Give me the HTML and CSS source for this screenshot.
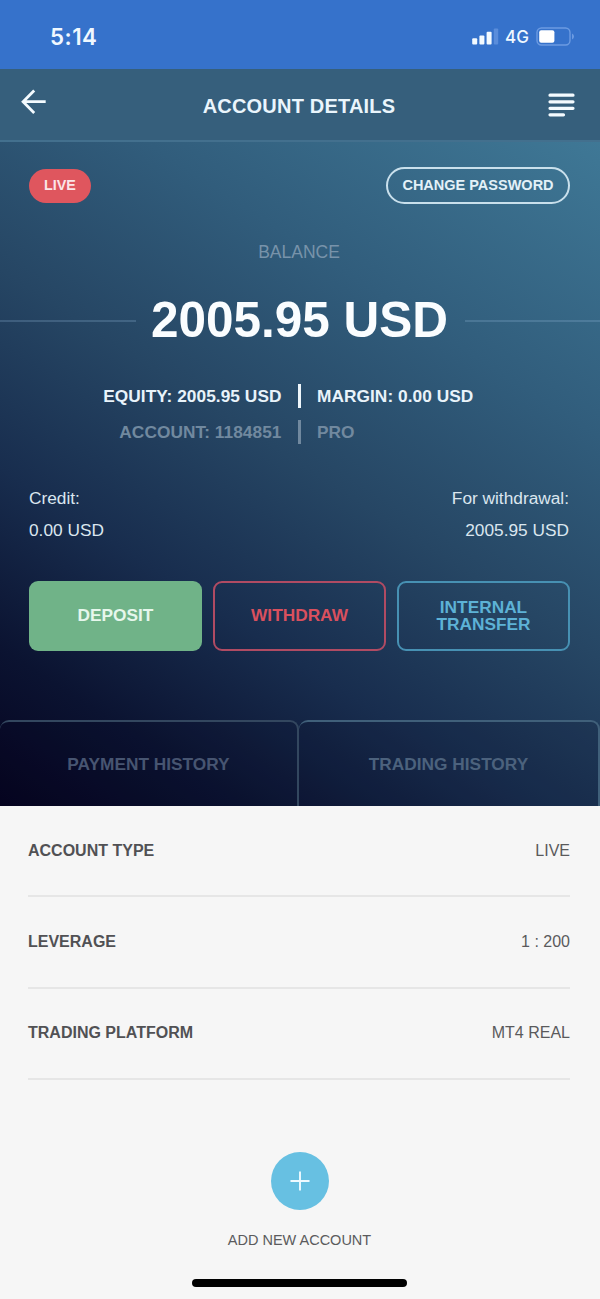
FILE: index.html
```
<!DOCTYPE html>
<html lang="en">
<head>
<meta charset="utf-8">
<title>Account details</title>
<link rel="stylesheet" href="styles.css">
</head>
<body>
<div class="status">
  <span class="time">5:14</span>
  <div class="indicators">
    <svg class="signal" width="28" height="17" viewBox="0 0 28 17"><g fill="#f3faff"><rect x="1.2" y="10.2" width="5" height="6.4" rx="1"/><rect x="8.4" y="7.4" width="5" height="9.2" rx="1"/><rect x="15.6" y="3.8" width="5" height="12.8" rx="1"/></g><rect x="22.8" y="0.6" width="4.4" height="16" rx="1" fill="#5a8ddb"/></svg>
    <span class="network">4G</span>
    <svg class="battery" width="40" height="19" viewBox="0 0 40 19"><rect x="2" y="1" width="33" height="17" rx="4.5" fill="none" stroke="#6c9be2" stroke-width="1.4"/><rect x="4.2" y="3.2" width="15.2" height="12.6" rx="2" fill="#fff"/><path d="M37 6.5q2 .8 2 3t-2 3z" fill="#6c9be2"/></svg>
  </div>
</div>
<header class="header">
  <svg class="back" width="26" height="26" viewBox="0 0 26 26" fill="none" stroke="#f4fbff" stroke-width="2.8"><path d="M14.2 1.5 3.1 12.7l11.1 11.2M3.1 12.7h22.6"/></svg>
  <h1 class="title">ACCOUNT DETAILS</h1>
  <svg class="menu" width="28" height="25" viewBox="0 0 28 25" stroke="#f4fbff" stroke-width="3.2" stroke-linecap="round"><path d="M3 2.2h23M3 8.8h23M3 15.3h23M3 21.8h13.5"/></svg>
</header>
<main>
  <section class="hero">
    <div class="top-row">
      <span class="badge">LIVE</span>
      <button class="password">CHANGE PASSWORD</button>
    </div>
    <div class="label">BALANCE</div>
    <div class="balance"><span class="rule"></span><span class="amount">2005.95 USD</span><span class="rule"></span></div>
    <div class="facts">
      <div class="fact"><span class="left">EQUITY: 2005.95 USD</span><i class="bar"></i><span>MARGIN: 0.00 USD</span></div>
      <div class="fact dim"><span class="left">ACCOUNT: 1184851</span><i class="bar"></i><span>PRO</span></div>
    </div>
    <div class="funds">
      <div>Credit:<br>0.00 USD</div>
      <div class="right">For withdrawal:<br>2005.95 USD</div>
    </div>
    <div class="actions">
      <button class="action deposit">DEPOSIT</button>
      <button class="action withdraw">WITHDRAW</button>
      <button class="action transfer">INTERNAL<br>TRANSFER</button>
    </div>
    <nav class="tabs">
      <a class="tab">PAYMENT HISTORY</a>
      <a class="tab">TRADING HISTORY</a>
    </nav>
  </section>
  <section class="details">
    <div class="row"><b>ACCOUNT TYPE</b><span>LIVE</span></div>
    <div class="row"><b>LEVERAGE</b><span>1 : 200</span></div>
    <div class="row"><b>TRADING PLATFORM</b><span>MT4 REAL</span></div>
  </section>
</main>
<footer class="footer">
  <button class="add"><svg width="20" height="20" viewBox="0 0 20 20" stroke="#effaff" stroke-width="1.9"><path d="M10 .5v19M.5 10h19"/></svg></button>
  <span class="add-label">ADD NEW ACCOUNT</span>
  <span class="home"></span>
</footer>
</body>
</html>
```
FILE: styles.css
```
* { box-sizing: border-box; }
body {
  margin: 0;
  width: 600px;
  height: 1299px;
  overflow: hidden;
  background: #f6f6f6;
  font-family: "Liberation Sans", Arial, sans-serif;
}
button { font-family: inherit; padding: 0; border: 0; background: none; }
.status {
  height: 69px;
  padding: 4px 25px 0 50px;
  display: flex;
  align-items: center;
  justify-content: space-between;
  background: #3672cb;
  color: #f0f8ff;
  font-family: Inter, sans-serif;
}
.time { font-size: 22.3px; font-weight: 600; letter-spacing: .5px; }
.indicators { display: flex; align-items: center; }
.network { width: 24px; margin: 0 6px 0 6px; font-size: 17px; font-weight: 500; }
.header {
  height: 73px;
  padding: 0 25px 0 20px;
  display: flex;
  justify-content: space-between;
  background: #365f7c;
  border-bottom: 2px solid #43708e;
}
.back { margin-top: 20px; }
.menu { margin-top: 24px; }
.title { margin: 26px -5px 0 0; font-size: 20px; line-height: 23px; letter-spacing: .2px; color: #eaf5fc; }
.hero {
  height: 664px;
  display: flex;
  flex-direction: column;
  background: linear-gradient(33deg, #05031f 0%, #0b1331 15%, #182d4e 32%, #264664 51%, #315d7c 72%, #3f7896 100%);
  color: #e9f3fa;
}
.top-row { display: flex; justify-content: space-between; padding: 25px 30px 0 29px; }
.badge {
  width: 62px;
  height: 34px;
  margin-top: 2px;
  border-radius: 17px;
  background: #df565e;
  color: #fbe5e8;
  font-size: 14.3px;
  font-weight: bold;
  line-height: 33px;
  text-align: center;
}
.password {
  width: 184px;
  height: 37px;
  padding-bottom: 2px;
  border: 2px solid #c9e0ec;
  border-radius: 18.5px;
  color: #e3f1f8;
  font-size: 14.5px;
  font-weight: bold;
}
.label { margin-top: 38px; text-align: center; font-size: 17.5px; line-height: 20px; color: #7893aa; padding-right: 2px; }
.balance { height: 56px; margin-top: 30px; display: flex; align-items: center; }
.rule { flex: 1; height: 2px; background: rgba(150, 190, 220, .24); margin-top: 2px; }
.amount { width: 331px; margin-left: -2px; padding-left: 1px; text-align: center; font-size: 49.5px; font-weight: bold; line-height: 56px; color: #fafdff; }
.facts { margin-top: 30px; }
.fact { height: 36px; display: grid; grid-template-columns: 281.5px 35.5px 1fr; align-items: center; font-size: 17.3px; font-weight: bold; letter-spacing: .05px; }
.left { text-align: right; }
.bar { width: 3px; height: 24px; justify-self: center; background: #eef6fb; }
.dim { color: #71899f; }
.dim .bar { background: #71899f; }
.funds { display: flex; justify-content: space-between; margin-top: 32px; padding: 0 31px 0 29px; font-size: 17.3px; line-height: 32px; color: #dbe6ef; }
.right { text-align: right; }
.actions { display: grid; grid-template-columns: repeat(3, 1fr); gap: 11px; margin-top: 35px; padding: 0 30px 0 29px; }
.action { height: 70px; border-radius: 9px; font-size: 17.3px; line-height: 17.5px; font-weight: bold; }
.deposit { background: #70b388; color: #e6f7ec; }
.withdraw { border: 2px solid #b04b63; color: #d9505e; }
.transfer { border: 2px solid #4791b3; color: #5db2d6; }
.tabs { display: flex; flex: 1; margin-top: 69px; }
.tab {
  flex: 0 0 299px;
  padding-top: 32px;
  border: 2px solid #33475f;
  border-left: 0;
  border-bottom: 0;
  border-radius: 9px 9px 0 0;
  background: rgba(5, 10, 30, .12);
  color: #475571;
  font-size: 17.3px;
  font-weight: bold;
  line-height: 20px;
  text-align: center;
}
.tab + .tab { flex: 1; color: #4c627d; border-color: #40607a; }
.details { padding: 0 30px 0 28px; }
.row { height: 91.3px; display: flex; justify-content: space-between; align-items: center; border-bottom: 2px solid #e6e6e6; font-size: 16px; color: #5a5a5c; }
.row b { color: #515154; }
.footer { display: flex; flex-direction: column; align-items: center; padding: 72px 1px 0 0; }
.add { width: 58px; height: 58px; border-radius: 50%; display: flex; align-items: center; justify-content: center; background: #67c0e2; }
.add-label { margin-top: 21px; font-size: 14.5px; line-height: 18px; color: #5b5b5d; }
.home { width: 215px; height: 8px; margin-top: 30px; border-radius: 4px; background: #000; }
```
